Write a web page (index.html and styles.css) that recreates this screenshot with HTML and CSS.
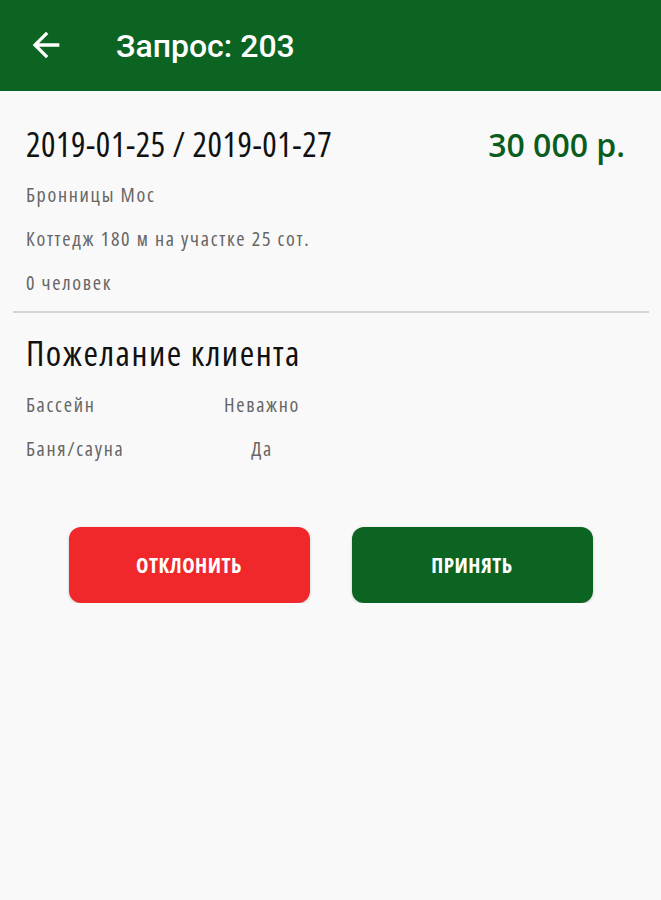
FILE: index.html
```html
<!DOCTYPE html>
<html lang="ru">
<head>
    <meta charset="UTF-8">
    <meta name="viewport" content="width=device-width, initial-scale=1.0">
    <title>Запрос: 203</title>
    <link rel="stylesheet" href="styles.css">
</head>
<body>
    <header class="topbar">
        <svg class="back" width="40" height="40" viewBox="0 0 24 24"><path d="M20 11H7.83l5.59-5.59L12 4l-8 8 8 8 1.41-1.41L7.83 13H20v-2z" fill="#fff"/></svg>
        <h1>Запрос: 203</h1>
    </header>
    <section class="summary">
        <div class="summary-head">
            <span class="dates">2019-01-25 / 2019-01-27</span>
            <span class="price">30 000 р.</span>
        </div>
        <p class="info">Бронницы Мос</p>
        <p class="info">Коттедж 180 м на участке 25 сот.</p>
        <p class="info">0 человек</p>
    </section>
    <hr class="divider">
    <section class="wishes">
        <h2>Пожелание клиента</h2>
        <div class="wish"><span class="wish-name">Бассейн</span><span class="wish-value">Неважно</span></div>
        <div class="wish"><span class="wish-name">Баня/сауна</span><span class="wish-value">Да</span></div>
    </section>
    <div class="actions">
        <button class="btn btn-decline">Отклонить</button>
        <button class="btn btn-accept">Принять</button>
    </div>
</body>
</html>
```

FILE: styles.css
```css
body { margin: 0; background: #f9f9f9; font-family: "Open Sans", sans-serif; font-stretch: condensed; color: #111; }
.topbar { background: #0b6422; height: 91px; display: flex; align-items: center; padding: 0 0 0 26px; box-sizing: border-box; }
.back { margin-top: -1px; }
.topbar h1 { margin: 0 0 0 50px; color: #fff; font-family: Roboto, sans-serif; font-stretch: normal; font-weight: 500; font-size: 32px; }
.summary { padding: 33px 36px 0 26px; }
.summary-head { display: flex; justify-content: space-between; align-items: baseline; line-height: 40px; }
.dates { font-size: 34px; letter-spacing: 0.55px; }
.price { font-size: 32px; color: #0b5d1e; font-weight: 600; font-stretch: normal; }
.info { margin: 0; color: #666; font-size: 20px; letter-spacing: 1.7px; line-height: 44px; }
.summary-head + .info { margin-top: 8px; }
.divider { margin: 6px 12px 0 13px; border: 0; height: 2px; background: #d4d4d4; }
.wishes { padding: 0 26px; }
.wishes h2 { margin: 18px 0 8px; font-weight: normal; font-size: 35px; letter-spacing: 1.5px; line-height: 44px; }
.wish { display: flex; color: #666; font-size: 20px; letter-spacing: 1.7px; line-height: 44px; }
.wish-name { width: 196px; }
.wish-value { width: 80px; text-align: center; }
.actions { display: flex; justify-content: center; gap: 42px; margin-top: 56px; }
.btn { width: 241px; height: 76px; border: 0; border-radius: 12px; color: #fff; font-family: inherit; font-stretch: condensed; font-weight: 700; font-size: 21px; letter-spacing: 0.5px; text-transform: uppercase; box-shadow: 0 1px 3px rgba(0,0,0,0.2); }
.btn-decline { background: #f0282b; }
.btn-accept { background: #0b6422; }
```
